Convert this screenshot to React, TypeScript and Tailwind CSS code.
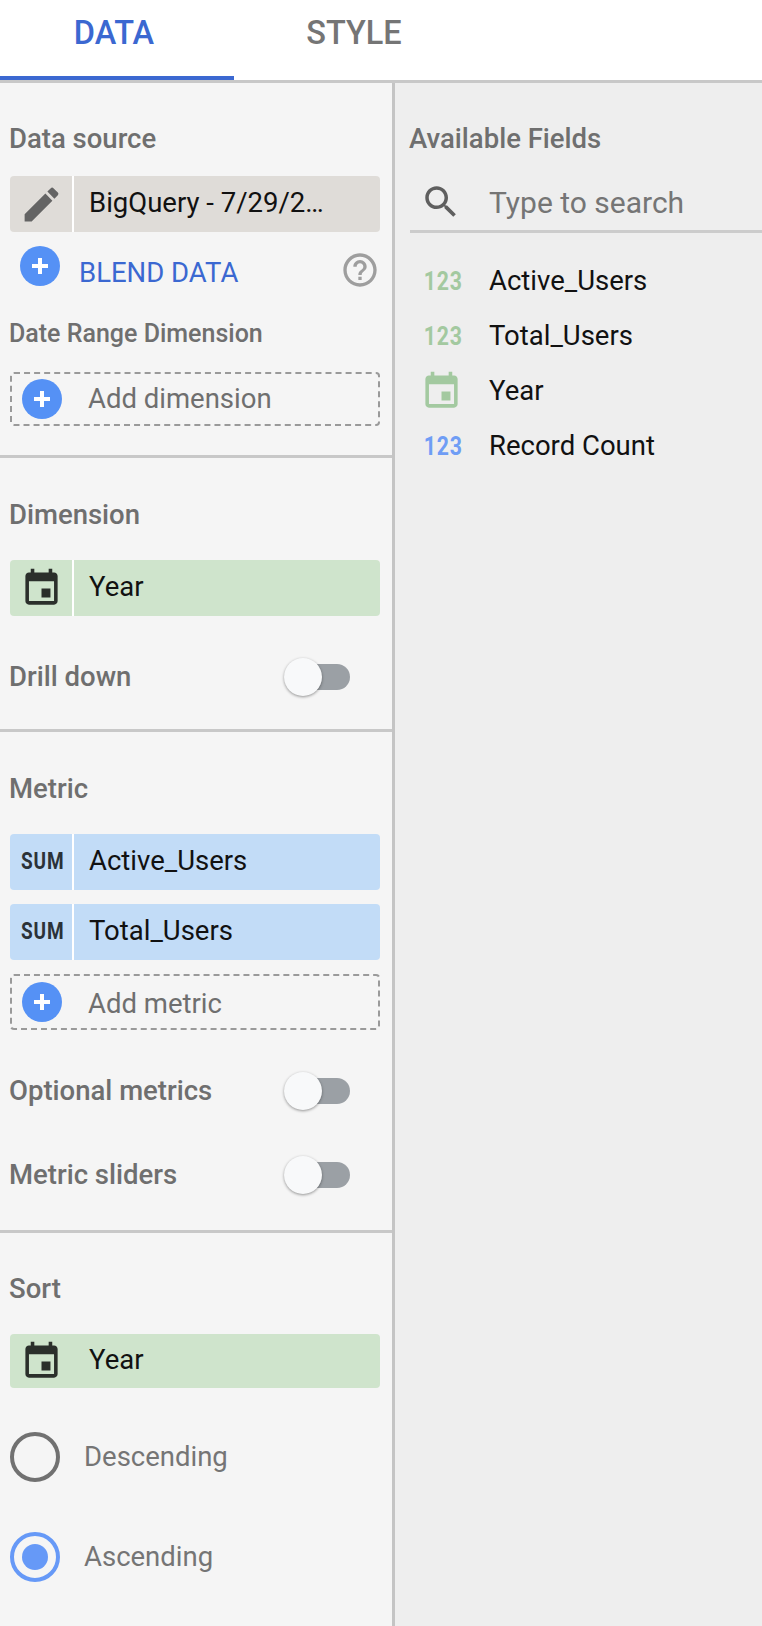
import React from "react";

const EDIT = "M3 17.25V21h3.75L17.81 9.94l-3.75-3.75L3 17.25zM20.71 7.04c.39-.39.39-1.02 0-1.41l-2.34-2.34c-.39-.39-1.02-.39-1.41 0l-1.83 1.83 3.75 3.75 1.83-1.83z";
const EVENT = "M17 12h-5v5h5v-5zM16 1v2H8V1H6v2H5c-1.11 0-1.99.9-1.99 2L3 19c0 1.1.89 2 2 2h14c1.1 0 2-.9 2-2V5c0-1.1-.9-2-2-2h-1V1h-2zm3 18H5V8h14v11z";
const SEARCH = "M15.5 14h-.79l-.28-.27C15.41 12.59 16 11.11 16 9.5 16 5.91 13.09 3 9.5 3S3 5.91 3 9.5 5.91 16 9.5 16c1.61 0 3.09-.59 4.23-1.57l.27.28v.79l5 4.99L20.49 19l-4.99-5zm-6 0C7.01 14 5 11.99 5 9.5S7.01 5 9.5 5 14 7.01 14 9.5 11.99 14 9.5 14z";
const HELP = "M11 18h2v-2h-2v2zm1-16C6.48 2 2 6.48 2 12s4.48 10 10 10 10-4.48 10-10S17.52 2 12 2zm0 18c-4.41 0-8-3.59-8-8s3.59-8 8-8 8 3.59 8 8-3.59 8-8 8zm0-14c-2.21 0-4 1.79-4 4h2c0-1.1.9-2 2-2s2 .9 2 2c0 2-3 1.75-3 5h2c0-2.25 3-2.5 3-5 0-2.21-1.79-4-4-4z";

function Icon({ d, className }: { d: string; className: string }) {
  return (
    <svg viewBox="0 0 24 24" className={className} fill="currentColor">
      <path d={d} />
    </svg>
  );
}

function PlusCircle() {
  return (
    <svg viewBox="0 0 40 40" className="w-10 h-10 shrink-0">
      <circle cx="20" cy="20" r="20" fill="#5591f5" />
      <path d="M20 12v16M12 20h16" stroke="#fff" strokeWidth="4" fill="none" />
    </svg>
  );
}

function Label({ children, className = "" }: { children: React.ReactNode; className?: string }) {
  return <div className={"text-[27.5px] leading-[30px] font-medium text-[#6f6f6f] " + className}>{children}</div>;
}

function Pill({
  icon,
  text,
  bg,
  divider = true,
  h = "h-14",
  className = "",
}: {
  icon: React.ReactNode;
  text: string;
  bg: string;
  divider?: boolean;
  h?: string;
  className?: string;
}) {
  return (
    <div className={"flex items-stretch ml-[10px] mr-3 rounded overflow-hidden " + h + " " + bg + " " + className}>
      <div className="w-[62px] flex items-center justify-center shrink-0">{icon}</div>
      <div className={divider ? "w-[2px] bg-white shrink-0" : "w-[2px] shrink-0"} />
      <div className="pl-[15px] pb-[2px] flex items-center text-[27.5px] text-[#111111] whitespace-nowrap">{text}</div>
    </div>
  );
}

function SumTag() {
  return <span className="text-[23.5px] font-bold text-[#2b3238] tracking-[1px] scale-x-[0.81] inline-block ml-[3px]">SUM</span>;
}

function AddBox({ text, className = "", textClass = "" }: { text: string; className?: string; textClass?: string }) {
  return (
    <div className={"flex items-center ml-[10px] mr-3 rounded border-2 border-dashed border-[#9a9a9a] pl-[10px] " + className}>
      <PlusCircle />
      <span className={"ml-[26px] text-[27.5px] text-[#6f6f6f] " + textClass}>{text}</span>
    </div>
  );
}

function Toggle() {
  return (
    <div className="relative w-[66px] h-[38px] flex items-center justify-end">
      <div className="w-[60px] h-[26px] rounded-full bg-[#9ba0a5]" />
      <div className="absolute left-0 top-0 w-[38px] h-[38px] rounded-full bg-[#f8f9fa] shadow-[0_1px_3px_rgba(0,0,0,0.4)]" />
    </div>
  );
}

function ToggleRow({ label, className = "" }: { label: string; className?: string }) {
  return (
    <div className={"flex items-center justify-between h-[38px] pl-[9px] pr-[42px] " + className}>
      <Label>{label}</Label>
      <Toggle />
    </div>
  );
}

function Radio({ label, checked, className = "" }: { label: string; checked?: boolean; className?: string }) {
  return (
    <div className={"flex items-center pl-[10px] " + className}>
      <div
        className={
          "w-[50px] h-[50px] rounded-full border-[4px] flex items-center justify-center " +
          (checked ? "border-[#6699f7]" : "border-[#717171]")
        }
      >
        {checked && <div className="w-[26px] h-[26px] rounded-full bg-[#6699f7]" />}
      </div>
      <span className="ml-[24px] text-[27.5px] text-[#757575]">{label}</span>
    </div>
  );
}

function Divider({ className = "" }: { className?: string }) {
  return <div className={"h-[3px] bg-[#c8c8c8] " + className} />;
}

function Num({ color }: { color: string }) {
  return (
    <span className={"w-[36px] text-center inline-block text-[25px] leading-none font-bold tracking-[1px] scale-x-[0.85] " + color}>
      123
    </span>
  );
}

function Field({ icon, text }: { icon: React.ReactNode; text: string }) {
  return (
    <div className="flex items-center h-10">
      <div className="w-[94px] pl-[26px] flex items-center shrink-0">{icon}</div>
      <span className="text-[27.5px] text-[#111111]">{text}</span>
    </div>
  );
}

const Cal = () => <Icon d={EVENT} className="w-[43px] h-[43px] text-[#2b2f2b]" />;

export default function App() {
  return (
    <div className="w-[762px] h-[1626px] overflow-hidden flex flex-col bg-white font-['Roboto',sans-serif]">
      <div className="h-20 flex shrink-0">
        <div className="w-[234px] h-20 border-b-4 border-[#3b68d1] flex items-center justify-center text-[32.5px] font-medium text-[#3b68d1] pb-[10px] pr-[6px]">
          DATA
        </div>
        <div className="w-[240px] flex items-center justify-center text-[32.5px] font-medium text-[#757575] pb-[14px]">
          STYLE
        </div>
      </div>
      <Divider className="shrink-0" />
      <div className="flex flex-1 min-h-0">
        <div className="w-[392px] bg-[#f5f5f5] shrink-0">
          <Label className="pl-[9px] mt-[41px]">Data source</Label>
          <Pill
            className="mt-[22px]"
            bg="bg-[#dfdcd8]"
            text="BigQuery - 7/29/2…"
            icon={<Icon d={EDIT} className="w-[45px] h-[45px] text-[#646464]" />}
          />
          <div className="flex items-center pl-5 pr-3 mt-[14px] h-10">
            <PlusCircle />
            <span className="ml-[19px] mt-[14px] text-[27.5px] text-[#3b68d1]">BLEND DATA</span>
            <Icon d={HELP} className="ml-auto w-10 h-10 text-[#9e9e9e] mt-[8px]" />
          </div>
          <div className="pl-[9px] mt-[33px] text-[25px] leading-[30px] font-medium text-[#6f6f6f]">Date Range Dimension</div>
          <AddBox text="Add dimension" className="mt-[23px] h-[54px]" />
          <Divider className="mt-[29px]" />
          <Label className="pl-[9px] mt-[42px]">Dimension</Label>
          <Pill className="mt-[30px]" bg="bg-[#cfe4cc]" text="Year" icon={<Cal />} />
          <ToggleRow label="Drill down" className="mt-[42px]" />
          <Divider className="mt-[33px]" />
          <Label className="pl-[9px] mt-[42px]">Metric</Label>
          <Pill className="mt-[30px]" bg="bg-[#c2dcf7]" text="Active_Users" icon={<SumTag />} />
          <Pill className="mt-[14px]" bg="bg-[#c2dcf7]" text="Total_Users" icon={<SumTag />} />
          <AddBox text="Add metric" textClass="mt-[3px]" className="mt-[14px] h-[56px]" />
          <ToggleRow label="Optional metrics" className="mt-[42px]" />
          <ToggleRow label="Metric sliders" className="mt-[46px]" />
          <Divider className="mt-[36px]" />
          <Label className="pl-[9px] mt-[41px]">Sort</Label>
          <Pill className="mt-[30px]" h="h-[54px]" divider={false} bg="bg-[#cfe4cc]" text="Year" icon={<Cal />} />
          <Radio label="Descending" className="mt-[44px]" />
          <Radio label="Ascending" checked className="mt-[50px]" />
        </div>
        <div className="w-[3px] bg-[#c4c4c4] shrink-0" />
        <div className="flex-1 bg-[#eeeeee] min-w-0">
          <Label className="pl-[14px] mt-[41px]">Available Fields</Label>
          <div className="ml-[15px] h-[59px] mt-[20px] border-b-[3px] border-[#cccccc] flex items-center">
            <Icon d={SEARCH} className="w-[42px] h-[42px] text-[#5f5f5f] ml-[10px] shrink-0" />
            <span className="ml-[27px] text-[30px] text-[#757575]">Type to search</span>
          </div>
          <div className="mt-[28px] flex flex-col gap-[15px]">
            <Field icon={<Num color="text-[#a3c9a0]" />} text="Active_Users" />
            <Field icon={<Num color="text-[#a3c9a0]" />} text="Total_Users" />
            <Field icon={<Icon d={EVENT} className="w-[43px] h-[43px] text-[#a3c9a0] -ml-[1px]" />} text="Year" />
            <Field icon={<Num color="text-[#6f9df5]" />} text="Record Count" />
          </div>
        </div>
      </div>
    </div>
  );
}
